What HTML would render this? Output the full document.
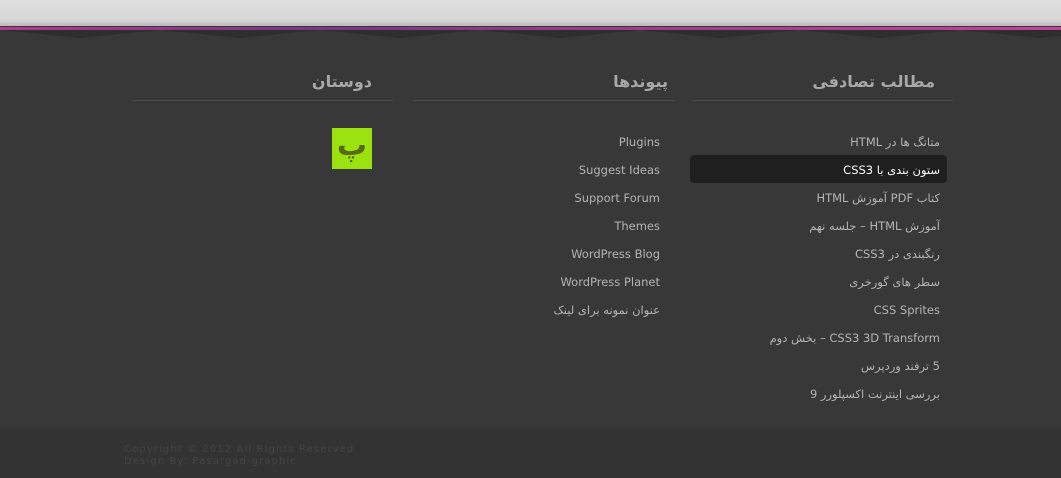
<!DOCTYPE html>
<html><head><meta charset="utf-8"><style>
body{margin:0;width:1061px;height:478px;background:#383838;position:relative;overflow:hidden;font-family:"Liberation Sans","DejaVu Sans",sans-serif}
.top{position:absolute;left:0;top:0;width:1061px;height:26px;background:linear-gradient(#e0e0e0,#d6d6d6 80%,#b8b8b8)}
.pink{position:absolute;left:0;top:27px;width:1061px;height:3px;background:linear-gradient(90deg,#b03a8c,#7a3585 30%,#9a3a8a 55%,#c2449a)}
.zig{position:absolute;left:0;top:30px}
.h{position:absolute;color:#a8a8a8;font-size:16px;font-weight:bold;direction:rtl;text-align:right;font-family:"DejaVu Sans",sans-serif}
.rule{position:absolute;height:1px;background:#4a4a4a;top:100px}
.it{position:absolute;font-size:11.5px;color:#b4b4b4;direction:rtl;text-align:right;font-family:"DejaVu Sans",sans-serif;white-space:nowrap}
.hl{position:absolute;left:690px;top:155px;width:257px;height:28px;background:#1f1f1f;border-radius:4px}
.foot{position:absolute;left:0;top:429px;width:1061px;height:49px;background:#333}
.ft{position:absolute;left:124px;font-size:10px;letter-spacing:1.1px;color:#444;font-family:"DejaVu Sans",sans-serif}
.logo{position:absolute;left:332px;top:128px;width:40px;height:41px;background:#9be20e;color:#556b10;font-size:30px;font-weight:bold;text-align:center;line-height:36px;font-family:"DejaVu Sans",sans-serif}
</style></head><body>
<div class="top"></div><div class="pink"></div>
<svg class="zig" width="1061" height="8"><path d="M0 0 L80 8 L160 0 L240 8 L320 0 L400 8 L480 0 L560 8 L640 0 L720 8 L800 0 L880 8 L960 0 L1040 8 L1061 6 V0Z" fill="#2e2e2e"/></svg>
<div class="h" style="right:126px;top:72px">مطالب تصادفی</div>
<div class="h" style="right:393px;top:72px">پیوندها</div>
<div class="h" style="right:689px;top:72px">دوستان</div>
<div class="rule" style="left:693px;width:260px"></div>
<div class="rule" style="left:414px;width:260px"></div>
<div class="rule" style="left:133px;width:260px"></div>
<div class="hl"></div>
<div class="it" style="right:121px;top:135px">متاتگ ها در HTML</div>
<div class="it" style="right:121px;top:163px;color:#fff">ستون بندی با CSS3</div>
<div class="it" style="right:121px;top:191px">کتاب PDF آموزش HTML</div>
<div class="it" style="right:121px;top:219px">آموزش HTML – جلسه نهم</div>
<div class="it" style="right:121px;top:247px">رنگبندی در CSS3</div>
<div class="it" style="right:121px;top:275px">سطر های گورخری</div>
<div class="it" style="right:121px;top:303px">CSS Sprites</div>
<div class="it" style="right:121px;top:331px">CSS3 3D Transform – بخش دوم</div>
<div class="it" style="right:121px;top:359px">5 ترفند وردپرس</div>
<div class="it" style="right:121px;top:387px">بررسی اینترنت اکسپلورر 9</div>
<div class="it" style="right:401px;top:135px">Plugins</div>
<div class="it" style="right:401px;top:163px">Suggest Ideas</div>
<div class="it" style="right:401px;top:191px">Support Forum</div>
<div class="it" style="right:401px;top:219px">Themes</div>
<div class="it" style="right:401px;top:247px">WordPress Blog</div>
<div class="it" style="right:401px;top:275px">WordPress Planet</div>
<div class="it" style="right:401px;top:303px">عنوان نمونه برای لینک</div>
<div class="logo">پ</div>
<div class="foot"></div>
<div class="ft" style="top:444px">Copyright © 2012 All Rights Reserved</div>
<div class="ft" style="top:456px">Design By: Pasargad-graphic</div>
</body></html>
